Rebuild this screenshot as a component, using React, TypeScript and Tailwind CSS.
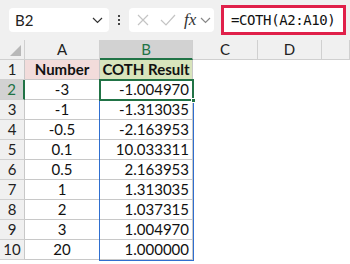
import { ReactNode } from 'react';

const rows: [string, string][] = [
	['-3', '-1.004970'],
	['-1', '-1.313035'],
	['-0.5', '-2.163953'],
	['0.1', '10.033311'],
	['0.5', '2.163953'],
	['1', '1.313035'],
	['2', '1.037315'],
	['3', '1.004970'],
	['20', '1.000000'],
];

const Chevron = ({ className = '' }: { className?: string }) => (
	<svg width="11" height="7" viewBox="0 0 11 7" className={className}>
		<path d="M1 1l4.5 4.5L10 1" fill="none" stroke="currentColor" strokeWidth="1.2" />
	</svg>
);

//region Toolbar
const Toolbar = () => (
	<div className="flex h-10 items-center bg-[#f0f0f0] pl-[9px]">
		<div className="flex h-6 w-[100px] items-center justify-between rounded-[4px] bg-white pl-[6px] pr-[6px] text-[15px] text-[#222]">
			<span>B2</span>
			<Chevron className="text-[#333]" />
		</div>
		<div className="mx-[9px] flex flex-col gap-[2px]">
			<span className="h-[2px] w-[2px] bg-[#444]" />
			<span className="h-[2px] w-[2px] bg-[#444]" />
			<span className="h-[2px] w-[2px] bg-[#444]" />
		</div>
		<div className="flex h-6 w-[85px] items-center rounded-[4px] bg-white pl-[7px]">
			<svg width="14" height="14" viewBox="0 0 14 14">
				<path d="M2 2l10 10M12 2L2 12" stroke="#c4c4c4" strokeWidth="1.2" />
			</svg>
			<svg width="16" height="14" viewBox="0 0 16 14" className="ml-[10px]">
				<path d="M1 7l5 5L15 2" fill="none" stroke="#c4c4c4" strokeWidth="1.2" />
			</svg>
			<span className="ml-[8px] font-['Liberation_Serif'] text-[17px] italic text-[#333]">fx</span>
			<Chevron className="ml-[4px] text-[#888]" />
		</div>
		<div className="ml-[7px] flex h-[30px] w-[125px] items-center border-[3px] border-[#e0204a] bg-white pl-[7px] font-['DejaVu_Sans_Mono',monospace] text-[14px] tracking-[-0.4px] text-[#111]">
			=COTH(A2:A10)
		</div>
	</div>
);

//region Cells
const Head = ({ children, active = false, w }: { children?: ReactNode; active?: boolean; w: string }) => (
	<div
		className={`${w} flex h-5 items-center justify-center border-r border-[#d0d0d0] text-[15px] ${active ? 'border-b-2 border-b-[#217346] bg-[#d2d2d2] text-[#217346]' : 'border-b border-b-[#d0d0d0] bg-[#f0f0f0] text-[#222]'}`}
	>
		{children}
	</div>
);

const RowHead = ({ n, active = false }: { n: number; active?: boolean }) => (
	<div
		className={`flex h-5 w-[25px] items-center justify-center border-b border-[#d0d0d0] text-[15px] ${active ? 'border-r-2 border-r-[#217346] bg-[#d2d2d2] text-[#217346]' : 'border-r border-r-[#c8c8c8] bg-[#f0f0f0] text-[#222]'}`}
	>
		{n}
	</div>
);

//region App
const App = () => {
	return (
		<div className="h-[264px] w-[350px] overflow-hidden bg-white font-['Lato','Liberation_Sans',sans-serif]">
			<Toolbar />
			<div className="relative">
				<div className="flex">
					<div className="relative h-5 w-[25px] border-b border-r border-[#d0d0d0] bg-[#f0f0f0]">
						<div className="absolute bottom-[3px] right-[3px] h-0 w-0 border-b-[11px] border-l-[11px] border-b-[#b8b8b8] border-l-transparent" />
					</div>
					<Head w="w-[75px]">A</Head>
					<Head w="w-[93px]" active>
						B
					</Head>
					<Head w="w-[65px]">C</Head>
					<Head w="w-[64px]">D</Head>
					<Head w="w-[28px]" />
				</div>
				<div className="flex">
					<RowHead n={1} />
					<div className="flex h-5 w-[75px] items-center justify-center border-b border-r border-[#c8c8c8] bg-[#f2dcdb] text-[15px] font-bold text-[#111]">
						Number
					</div>
					<div className="flex h-5 w-[93px] items-center justify-center border-b border-r border-[#c8c8c8] bg-[#d8e4bc] text-[15px] font-bold text-[#111]">
						COTH Result
					</div>
				</div>
				{rows.map(([a, b], i) => (
					<div className="flex" key={i}>
						<RowHead n={i + 2} active={i === 0} />
						<div className="flex h-5 w-[75px] items-center justify-center border-b border-r border-[#c8c8c8] text-[15px] text-[#111]">
							{a}
						</div>
						<div className="flex h-5 w-[93px] items-center justify-end border-b border-r border-[#c8c8c8] pr-[3px] text-[15px] text-[#111]">
							{b}
						</div>
					</div>
				))}
				{/* spill range outline */}
				<div className="pointer-events-none absolute left-[99px] top-[40px] h-[181px] w-[95px] border border-[#2f6fd0]" />
				{/* active cell */}
				<div className="pointer-events-none absolute left-[99px] top-[39px] h-[22px] w-[95px] border-2 border-[#217346]" />
				<div className="absolute left-[191px] top-[58px] h-[5px] w-[5px] border border-white bg-[#217346]" />
			</div>
		</div>
	);
};
//endregion

export default App;
